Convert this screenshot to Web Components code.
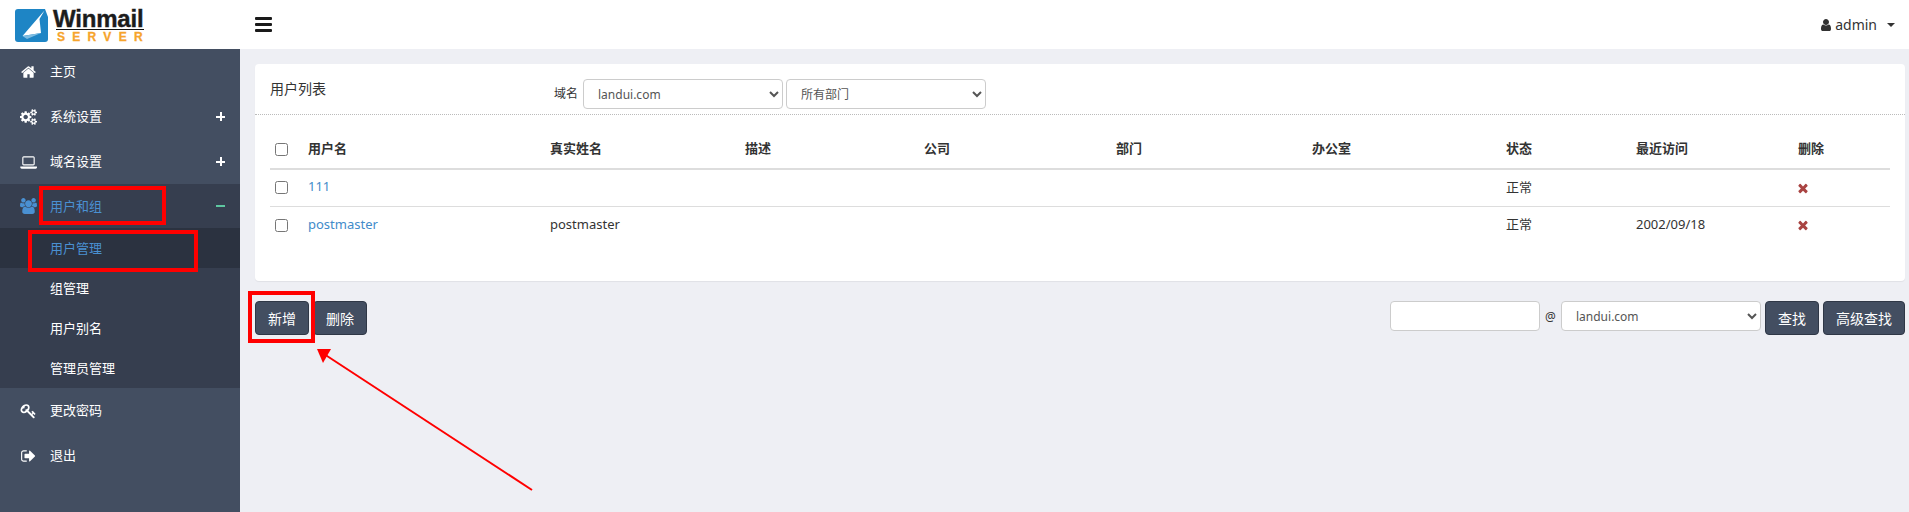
<!DOCTYPE html>
<html lang="zh">
<head>
<meta charset="utf-8">
<title>Winmail</title>
<style>
  html, body { margin: 0; height: 100%; }
  body {
    font-family: "Noto Sans", "Noto Sans CJK SC", sans-serif;
    font-size: 13px;
    color: #333;
    background: #eeeff4;
    overflow: hidden;
  }
</style>
</head>
<body>
<wm-app></wm-app>

<script>
const ICONS = {
  home: ['0 0 1792 1792', 'M1472 992v480q0 26-19 45t-45 19h-384v-384h-256v384h-384q-26 0-45-19t-19-45v-480q0-1 .5-3t.5-3l575-474 575 474q1 2 1 6zm223-69l-62 74q-8 9-21 11h-3q-13 0-21-7l-692-577-692 577q-12 8-24 7-13-2-21-11l-62-74q-8-10-7-23.500t11-21.500l719-599q32-26 76-26t76 26l244 204v-195q0-14 9-23t23-9h192q14 0 23 9t9 23v408l219 182q10 8 11 21.500t-7 23.500z'],
  cogs: ['0 0 1920 1792', 'M896 896q0-106-75-181t-181-75-181 75-75 181 75 181 181 75 181-75 75-181zm768 512q0-52-38-90t-90-38-90 38-38 90q0 53 37.500 90.500t90.500 37.500 90.500-37.500 37.500-90.500zm0-1024q0-52-38-90t-90-38-90 38-38 90q0 53 37.500 90.500t90.500 37.500 90.500-37.500 37.500-90.500zm-384 421v185q0 10-7 19.500t-16 10.500l-155 24q-11 35-32 76 34 48 90 115 7 11 7 20 0 12-7 19-23 30-82.500 89.500t-78.500 59.500q-11 0-21-7l-115-90q-37 19-77 31-11 108-23 155-7 24-30 24h-186q-11 0-20-7.500t-10-17.500l-23-153q-34-10-75-31l-118 89q-7 7-20 7-11 0-21-8-144-133-144-160 0-9 7-19 10-14 41-53t47-61q-23-44-35-82l-152-24q-10-1-17-9.500t-7-19.500v-185q0-10 7-19.500t16-10.500l155-24q11-35 32-76-34-48-90-115-7-11-7-20 0-12 7-20 22-30 82-89t79-59q11 0 21 7l115 90q34-18 77-32 11-108 23-154 7-24 30-24h186q11 0 20 7.500t10 17.500l23 153q34 10 75 31l118-89q8-7 20-7 11 0 21 8 144 133 144 160 0 8-7 19-12 16-42 54t-45 60q23 48 34 82l152 23q10 2 17 10.500t7 19.500zm640 533v140q0 16-149 31-12 27-30 52 51 113 51 138 0 4-4 7-122 71-124 71-8 0-46-47t-52-68q-20 2-30 2t-30-2q-14 21-52 68t-46 47q-2 0-124-71-4-3-4-7 0-25 51-138-18-25-30-52-149-15-149-31v-140q0-16 149-31 13-29 30-52-51-113-51-138 0-4 4-7 4-2 35-20t59-34 30-16q8 0 46 46.500t52 67.500q20-2 30-2t30 2q51-71 92-112l6-2q4 0 124 70 4 3 4 7 0 25-51 138 17 23 30 52 149 15 149 31zm0-1024v140q0 16-149 31-12 27-30 52 51 113 51 138 0 4-4 7-122 71-124 71-8 0-46-47t-52-68q-20 2-30 2t-30-2q-14 21-52 68t-46 47q-2 0-124-71-4-3-4-7 0-25 51-138-18-25-30-52-149-15-149-31v-140q0-16 149-31 13-29 30-52-51-113-51-138 0-4 4-7 4-2 35-20t59-34 30-16q8 0 46 46.500t52 67.500q20-2 30-2t30 2q51-71 92-112l6-2q4 0 124 70 4 3 4 7 0 25-51 138 17 23 30 52 149 15 149 31z'],
  laptop: ['0 0 1920 1792', 'M416 1280q-66 0-113-47t-47-113v-704q0-66 47-113t113-47h1088q66 0 113 47t47 113v704q0 66-47 113t-113 47h-1088zm-32-864v704q0 13 9.500 22.500t22.500 9.500h1088q13 0 22.500-9.500t9.500-22.500v-704q0-13-9.500-22.500t-22.500-9.500h-1088q-13 0-22.500 9.500t-9.500 22.500zm1376 992h160v96q0 66-79 113t-191 47h-1344q-112 0-191-47t-79-113v-96h1724z'],
  users: ['0 0 1920 1792', 'M593 896q-162 5-265 128h-134q-82 0-138-40.500t-56-118.500q0-353 124-353 6 0 43.500 21t97.500 42.500 119 21.500q67 0 133-23-5 37-5 66 0 139 81 256zm1071 637q0 120-73 189.500t-194 69.500h-874q-121 0-194-69.500t-73-189.500q0-53 3.500-103.500t14-109 26.500-108.500 43-97.500 62-81 85.500-53.500 111.500-20q10 0 43 21.500t73 48 107 48 135 21.500 135-21.500 107-48 73-48 43-21.500q61 0 111.500 20t85.500 53.500 62 81 43 97.500 26.500 108.500 14 109 3.500 103.500zm-1024-1277q0 106-75 181t-181 75-181-75-75-181 75-181 181-75 181 75 75 181zm704 384q0 159-112.500 271.500t-271.500 112.500-271.500-112.500-112.500-271.500 112.500-271.500 271.500-112.500 271.500 112.500 112.500 271.500zm576 225q0 78-56 118.500t-138 40.500h-134q-103-123-265-128 81-117 81-256 0-29-5-66 66 23 133 23 59 0 119-21.500t97.500-42.500 43.500-21q124 0 124 353zm-128-609q0 106-75 181t-181 75-181-75-75-181 75-181 181-75 181 75 75 181z'],
  key: ['0 0 1792 1792', 'M832 512q0-80-56-136t-136-56-136 56-56 136q0 42 19 83-41-19-83-19-80 0-136 56t-56 136 56 136 136 56 136-56 56-136q0-42-19-83 41 19 83 19 80 0 136-56t56-136zm851 704q0 17-49 66t-66 49q-9 0-28.500-16t-36.500-33-38.500-40-24.500-26l-96 96 220 220q28 28 28 68 0 42-39 81t-81 39q-40 0-68-28l-671-671q-176 131-365 131-163 0-265.500-102.500t-102.500-265.500q0-160 95-313t248-248 313-95q163 0 265.500 102.500t102.500 265.500q0 189-131 365l355 355 96-96q-3-3-26-24.500t-40-38.500-33-36.500-16-28.500q0-17 49-66t66-49q13 0 23 10 6 6 46 44.500t82 79.500 86.500 86 73 78 28.500 41z'],
  signout: ['0 0 1792 1792', 'M704 1440q0 4 1 20t.5 26.500-3 23.500-10 19.500-20.500 6.500h-320q-119 0-203.500-84.500t-84.500-203.500v-704q0-119 84.500-203.500t203.500-84.500h320q13 0 22.500 9.500t9.500 22.500q0 4 1 20t.5 26.500-3 23.500-10 19.500-20.500 6.500h-320q-66 0-113 47t-47 113v704q0 66 47 113t113 47h312l11.500 1 11.500 3 8 5.500 7 9 2 13.500zm928-544q0 26-19 45l-544 544q-19 19-45 19t-45-19-19-45v-288h-448q-26 0-45-19t-19-45v-384q0-26 19-45t45-19h448v-288q0-26 19-45t45-19 45 19l544 544q19 19 19 45z'],
  user: ['0 0 1792 1792', 'M1536 1399q0 109-62.500 187t-150.500 78h-854q-88 0-150.500-78t-62.500-187q0-85 8.500-160.500t31.500-152 58.500-131 94-89 134.500-34.500q131 128 313 128t313-128q76 0 134.500 34.500t94 89 58.500 131 31.500 152 8.500 160.500zm-256-887q0 159-112.500 271.500t-271.500 112.500-271.500-112.500-112.500-271.500 112.500-271.500 271.500-112.500 271.500 112.500 112.500 271.500z'],
  times: ['0 0 1792 1792', 'M1490 1322q0 40-28 68l-136 136q-28 28-68 28t-68-28l-294-294-294 294q-28 28-68 28t-68-28l-136-136q-28-28-28-68t28-68l294-294-294-294q-28-28-28-68t28-68l136-136q28-28 68-28t68 28l294 294 294-294q28-28 68-28t68 28l136 136q28 28 28 68t-28 68l-294 294 294 294q28 28 28 68z']
};

function icon(name, w, h) {
  const [box, d] = ICONS[name];
  return `<svg width="${w}" height="${h}" viewBox="${box}" fill="currentColor"><path d="${d}"/></svg>`;
}

class WmLogo extends HTMLElement {
  connectedCallback() {
    this.attachShadow({ mode: 'open' }).innerHTML = `
      <style>
        :host { display: flex; align-items: flex-start; width: 240px; height: 49px; padding: 9px 0 0 15px; box-sizing: border-box; }
        svg { flex: none; display: block; }
        .words { margin: 0 0 0 5px; width: 91px; font-family: "Liberation Sans", sans-serif; font-weight: 700; }
        .name { font-size: 24px; line-height: 20px; color: #1c1c1c; letter-spacing: -.2px; -webkit-text-stroke: .4px #1c1c1c; white-space: nowrap; }
        .rule { height: 1px; margin-left: 3px; background: #111; }
        .sub { margin: 3px 0 0 4px; font-size: 12px; line-height: 9px; color: #f6a42c; letter-spacing: 7.3px; -webkit-text-stroke: .3px #f6a42c; white-space: nowrap; }
      </style>
      <svg width="33" height="33" viewBox="0 0 33 33">
        <rect width="33" height="33" rx="3" fill="#1e85c5"/>
        <path d="M30 0 L33 0 L33 8 Z" fill="#fff"/>
        <path d="M7.500 27 L23 9 L29.500 1.500 L24.500 10 L26 24 Z" fill="#fff"/>
        <path d="M7.500 27 L26 24 L12 30 Z" fill="#7fbde2"/>
      </svg>
      <div class="words"><div class="name">Winmail</div><div class="rule"></div><div class="sub">SERVER</div></div>`;
  }
}

class WmHeader extends HTMLElement {
  connectedCallback() {
    this.attachShadow({ mode: 'open' }).innerHTML = `
      <style>
        :host { display: flex; align-items: center; height: 49px; background: #fff; font-size: 14px; color: #333; }
        .burger { display: grid; gap: 3px; width: 17px; margin-left: 15px; }
        .burger i { display: block; height: 3px; background: #1a1a1a; border-radius: 1px; }
        .user { margin-left: auto; display: flex; align-items: center; padding-right: 14px; }
        .user svg { margin-right: 2px; color: #333; }
        .caret { margin-left: 10px; border: 4px solid transparent; border-top-color: #333; border-bottom: 0; }
      </style>
      <wm-logo></wm-logo>
      <div class="burger"><i></i><i></i><i></i></div>
      <div class="user">${icon('user', 14, 14)}<span>admin</span><span class="caret"></span></div>`;
  }
}

class WmNavItem extends HTMLElement {
  connectedCallback() {
    const ic = this.getAttribute('icon');
    const mark = this.getAttribute('mark');
    this.attachShadow({ mode: 'open' }).innerHTML = `
      <style>
        :host { display: flex; align-items: center; height: 45px; padding-left: 20px; padding-right: 15px; color: #fff; }
        :host([active]) { background: #363e4f; color: #4a90d2; height: 44px; }
        .ico { width: 30px; flex: none; display: flex; }
        .txt { margin-top: -2px; }
        .mark { margin-left: auto; width: 9px; height: 9px; position: relative; }
        .mark::before { content: ""; position: absolute; left: 0; right: 0; top: 3.5px; height: 2px; background: currentColor; }
        .plus::after { content: ""; position: absolute; top: 0; bottom: 0; left: 3.5px; width: 2px; background: currentColor; }
        .minus { color: #5ec7a1; }
      </style>
      <span class="ico">${ic ? icon(ic, 17, 16) : ''}</span>
      <span class="txt"><slot></slot></span>
      ${mark ? `<span class="mark ${mark}"></span>` : ''}`;
  }
}

class WmSubItem extends HTMLElement {
  connectedCallback() {
    this.attachShadow({ mode: 'open' }).innerHTML = `
      <style>
        :host { display: flex; align-items: center; height: 40px; padding-left: 50px; padding-bottom: 2px; box-sizing: border-box; color: #fff; }
        :host([active]) { background: #2b3240; color: #4a90d2; }
      </style>
      <slot></slot>`;
  }
}

class WmSidebar extends HTMLElement {
  connectedCallback() {
    this.attachShadow({ mode: 'open' }).innerHTML = `
      <style>
        :host { display: block; width: 240px; flex: none; background: #434e61; }
        .sub { background: #363e4f; }
      </style>
      <wm-nav-item icon="home">主页</wm-nav-item>
      <wm-nav-item icon="cogs" mark="plus">系统设置</wm-nav-item>
      <wm-nav-item icon="laptop" mark="plus">域名设置</wm-nav-item>
      <wm-nav-item icon="users" mark="minus" active>用户和组</wm-nav-item>
      <div class="sub">
        <wm-sub-item active>用户管理</wm-sub-item>
        <wm-sub-item>组管理</wm-sub-item>
        <wm-sub-item>用户别名</wm-sub-item>
        <wm-sub-item>管理员管理</wm-sub-item>
      </div>
      <wm-nav-item icon="key">更改密码</wm-nav-item>
      <wm-nav-item icon="signout">退出</wm-nav-item>`;
  }
}

class WmUserCard extends HTMLElement {
  connectedCallback() {
    const rows = [
      { name: '111', real: '', last: '' },
      { name: 'postmaster', real: 'postmaster', last: '2002/09/18' }
    ];
    this.attachShadow({ mode: 'open' }).innerHTML = `
      <style>
        :host { display: block; height: 217px; background: #fff; border-radius: 4px; box-shadow: 0 1px 1px rgba(0,0,0,.06); }
        .top { display: flex; align-items: flex-start; height: 51px; box-sizing: border-box; padding: 15px 0 0 15px; border-bottom: 1px dotted #bbb; }
        h3 { margin: 0; width: 284px; font-size: 14px; font-weight: 400; line-height: 20px; color: #333; }
        label { font-size: 12px; color: #333; line-height: 30px; margin-right: 5px; }
        select { font: 12px "Noto Sans", "Noto Sans CJK SC", sans-serif; color: #555; background: #fff; height: 30px; width: 200px; margin-right: 3px; padding: 0 10px; border: 1px solid #ccc; border-radius: 4px; box-sizing: border-box; }
        .wrap { padding: 15px 15px 0; }
        table { width: 100%; table-layout: fixed; border-collapse: collapse; color: #333; }
        th { box-sizing: border-box; font-weight: 700; text-align: left; height: 39px; padding: 0 0 3px; border-bottom: 2px solid #ddd; }
        th.box { padding: 0; }
        td { box-sizing: border-box; height: 37px; padding: 0 0 3px; }
        td.box, td.x { padding: 0; }
        tr + tr + tr td { height: 38px; }
        tr.line td { border-bottom: 1px solid #ddd; }
        input { display: block; margin: 0 0 0 5px; }
        a { color: #428bca; text-decoration: none; }
        .del { color: #a94442; display: block; margin-left: -2px; height: 14px; }
        .del svg { display: block; }
      </style>
      <div class="top">
        <h3>用户列表</h3>
        <label>域名</label>
        <select><option>landui.com</option></select>
        <select><option>所有部门</option></select>
      </div>
      <div class="wrap">
        <table>
          <colgroup>
            <col style="width:38px"><col style="width:242px"><col style="width:195px"><col style="width:179px">
            <col style="width:192px"><col style="width:196px"><col style="width:194px"><col style="width:130px">
            <col style="width:162px"><col style="width:92px">
          </colgroup>
          <tr>
            <th class="box"><input type="checkbox"></th><th>用户名</th><th>真实姓名</th><th>描述</th><th>公司</th>
            <th>部门</th><th>办公室</th><th>状态</th><th>最近访问</th><th>删除</th>
          </tr>
          ${rows.map((r, i) => `
            <tr class="${i === 0 ? 'line' : ''}">
              <td class="box"><input type="checkbox"></td>
              <td><a href="#">${r.name}</a></td>
              <td>${r.real}</td><td></td><td></td><td></td><td></td>
              <td>正常</td><td>${r.last}</td>
              <td class="x"><span class="del">${icon('times', 14, 14)}</span></td>
            </tr>`).join('')}
        </table>
      </div>`;
  }
}

class WmButton extends HTMLElement {
  connectedCallback() {
    this.attachShadow({ mode: 'open' }).innerHTML = `
      <style>
        :host { display: inline-flex; align-items: center; height: 34px; box-sizing: border-box; padding: 0 12px; font-size: 14px; color: #fff; background: #434e61; border: 1px solid #2f3746; border-radius: 4px; }
      </style>
      <slot></slot>`;
  }
}

class WmToolbar extends HTMLElement {
  connectedCallback() {
    this.attachShadow({ mode: 'open' }).innerHTML = `
      <style>
        :host { display: flex; align-items: flex-start; gap: 4px; margin-top: 20px; }
        .search { margin-left: auto; display: flex; align-items: flex-start; gap: 4px; }
        input, select { box-sizing: border-box; height: 30px; margin: 0; border: 1px solid #ccc; border-radius: 4px; background: #fff; font: 12px "Noto Sans", "Noto Sans CJK SC", sans-serif; color: #555; }
        input { width: 150px; }
        select { width: 200px; padding: 0 10px; }
        .at { font-size: 12px; line-height: 32px; color: #333; width: 21px; margin-right: -4px; margin-left: -4px; text-align: center; }
      </style>
      <wm-button>新增</wm-button>
      <wm-button>删除</wm-button>
      <div class="search">
        <input type="text">
        <span class="at">@</span>
        <select><option>landui.com</option></select>
        <wm-button>查找</wm-button>
        <wm-button>高级查找</wm-button>
      </div>`;
  }
}

/* red hand-drawn marks that sit over the screenshot */
class WmAnnotations extends HTMLElement {
  connectedCallback() {
    this.attachShadow({ mode: 'open' }).innerHTML = `
      <style>
        :host { position: absolute; inset: 0; pointer-events: none; }
        div { position: absolute; box-sizing: border-box; border: 4px solid #f00; }
        svg { position: absolute; left: 0; top: 0; }
      </style>
      <div style="left:39px;top:186px;width:127px;height:39px"></div>
      <div style="left:28px;top:230px;width:170px;height:42px"></div>
      <div style="left:248px;top:291px;width:67px;height:52px"></div>
      <svg width="1909" height="512">
        <line x1="532" y1="490" x2="324" y2="354" stroke="#f00" stroke-width="2"/>
        <polygon points="317,349 331,349 323,363" fill="#f00"/>
      </svg>`;
  }
}

class WmApp extends HTMLElement {
  connectedCallback() {
    this.attachShadow({ mode: 'open' }).innerHTML = `
      <style>
        :host { display: flex; flex-direction: column; height: 512px; position: relative; overflow: hidden; }
        .body { flex: 1; display: flex; min-height: 0; }
        main { flex: 1; min-width: 0; padding: 15px 4px 0 15px; }
      </style>
      <wm-header></wm-header>
      <div class="body">
        <wm-sidebar></wm-sidebar>
        <main>
          <wm-user-card></wm-user-card>
          <wm-toolbar></wm-toolbar>
        </main>
      </div>
      <wm-annotations></wm-annotations>`;
  }
}

customElements.define('wm-logo', WmLogo);
customElements.define('wm-header', WmHeader);
customElements.define('wm-nav-item', WmNavItem);
customElements.define('wm-sub-item', WmSubItem);
customElements.define('wm-sidebar', WmSidebar);
customElements.define('wm-user-card', WmUserCard);
customElements.define('wm-button', WmButton);
customElements.define('wm-toolbar', WmToolbar);
customElements.define('wm-annotations', WmAnnotations);
customElements.define('wm-app', WmApp);
</script>
</body>
</html>
